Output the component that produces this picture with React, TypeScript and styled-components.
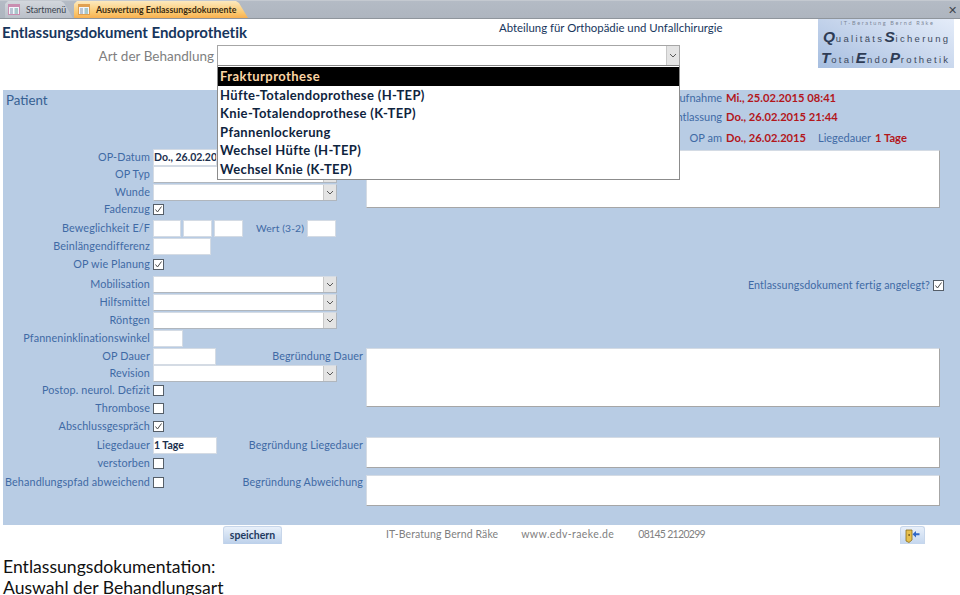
import styled, { createGlobalStyle } from "styled-components";

const GlobalStyle = createGlobalStyle`
  html, body {
    margin: 0;
    padding: 0;
    background: #fff;
    overflow: hidden;
  }
  body {
    font-family: "Lato", "Open Sans", sans-serif;
  }
`;

const Page = styled.div`
  width: 960px;
  height: 595px;
  overflow: hidden;
`;

/* tab strip */
const TabBar = styled.div`
  height: 19px;
  box-sizing: border-box;
  background: linear-gradient(#b4bbc5, #aeb5bf);
  border-top: 1px solid #c4c9d0;
  border-bottom: 1px solid #8f959c;
  display: flex;
  align-items: flex-end;
  padding-left: 5px;
`;

const Tab = styled.div<{ $active?: boolean }>`
  height: 17px;
  box-sizing: border-box;
  width: ${({ $active }) => ($active ? "174px" : "68px")};
  margin-right: ${({ $active }) => ($active ? "0" : "1px")};
  padding-left: ${({ $active }) => ($active ? "4px" : "3px")};
  display: flex;
  align-items: center;
  gap: 6px;
  font-size: 8.8px;
  font-weight: ${({ $active }) => ($active ? 700 : 400)};
  color: ${({ $active }) => ($active ? "#3a2a10" : "#39424e")};
  white-space: nowrap;
  background: ${({ $active }) =>
    $active
      ? "linear-gradient(#fde9bd, #fbc76d 70%, #f8b050)"
      : "linear-gradient(#d3d7dd, #b9bfc8)"};
  clip-path: polygon(0 100%, 0 3px, 3px 0, calc(100% - 12px) 0, calc(100% - 9px) 2px, 100% 100%);
`;

const CloseMark = styled.div`
  margin-left: auto;
  margin-right: 3px;
  align-self: center;
  font-size: 11px;
  line-height: 16px;
  color: #40464e;
`;

/* heading area above the blue panel */
const Head = styled.div`
  height: 71px;
  display: flex;
`;

const HeadLeft = styled.div`
  width: 680px;
  padding: 4px 0 0 2px;
  box-sizing: border-box;
`;

const Title = styled.h1`
  margin: 0;
  font-size: 15px;
  line-height: 18px;
  font-weight: 700;
  color: #17365d;
  letter-spacing: -0.03px;
`;

const ChoiceRow = styled.div`
  margin-top: 4px;
  display: flex;
  align-items: center;
`;

const ChoiceLabel = styled.div`
  width: 215px;
  text-align: right;
  padding-right: 3px;
  box-sizing: border-box;
  font-size: 13.5px;
  color: #7f7f7f;
`;

const BigCombo = styled.div`
  position: relative;
  z-index: 5;
  width: 463px;
  height: 21px;
  box-sizing: border-box;
  background: #fff;
  border: 1px solid #a6a6a6;
  border-bottom-color: #888;
  display: flex;
  justify-content: flex-end;
`;

const ArrowBox = styled.div`
  width: 12px;
  background: #e4e4e4;
  border-left: 1px solid #c8c8c8;
  display: flex;
  align-items: center;
  justify-content: center;
`;

const DropList = styled.ul`
  position: absolute;
  left: -1px;
  top: 20px;
  width: 463px;
  margin: 0;
  padding: 1px 0 0;
  box-sizing: border-box;
  list-style: none;
  background: #fff;
  border: 1px solid #8c8c8c;
  border-top: 0;
`;

const DropItem = styled.li<{ $picked?: boolean }>`
  height: 18.6px;
  line-height: 18.6px;
  padding-left: 2px;
  font-size: 13px;
  font-weight: 700;
  color: ${({ $picked }) => ($picked ? "#fbd5a5" : "#0f243e")};
  background: ${({ $picked }) => ($picked ? "#000" : "transparent")};
  letter-spacing: ${({ $picked }) => ($picked ? "0.45px" : "0.35px")};
`;

const Department = styled.div`
  width: 138px;
  margin-left: -181px;
  padding-top: 2px;
  white-space: nowrap;
  font-size: 11.4px;
  line-height: 14px;
  color: #17365d;
`;

const Logo = styled.div`
  width: 136px;
  height: 49px;
  margin: 0 6px 0 auto;
  box-sizing: border-box;
  padding: 1px 0 0 3px;
  background: linear-gradient(25deg, #a6bee0, #c6d5ec 50%, #e4ecf9);
  color: #3d4a60;
  white-space: nowrap;
  overflow: hidden;
`;

const LogoTop = styled.div`
  font-size: 5.5px;
  line-height: 7px;
  letter-spacing: 1.65px;
  text-align: center;
  color: #7d8798;
`;

const LogoLine = styled.div<{ $indent: number }>`
  font-family: "Liberation Sans", sans-serif;
  font-size: 9.5px;
  line-height: 19px;
  letter-spacing: 2.3px;
  padding-left: ${({ $indent }) => `${$indent}px`};
`;

const LogoCap = styled.span`
  font-size: 15.5px;
  font-style: italic;
  font-weight: 700;
  color: #2e3c55;
  letter-spacing: 0.8px;
`;

/* blue panel */
const Panel = styled.div`
  margin-left: 3px;
  height: 435px;
  background: #b8cce4;
  display: flex;
`;

const LeftColumn = styled.div`
  width: 360px;
  flex: none;
`;

const PanelTitle = styled.div`
  height: 59px;
  padding: 2px 0 0 3px;
  box-sizing: border-box;
  font-size: 13.3px;
  line-height: 17px;
  color: #366092;
`;

const Row = styled.div<{ $h: number }>`
  height: ${({ $h }) => `${$h}px`};
  display: flex;
  align-items: flex-start;
`;

const Label = styled.div`
  width: 147px;
  flex: none;
  text-align: right;
  font-size: 10.8px;
  line-height: 16px;
  color: #3f6aa5;
  white-space: nowrap;
  letter-spacing: 0.12px;
`;

const DoneLabel = styled(Label)`
  width: auto;
  font-size: 10.7px;
`;

const Field = styled.div<{ $w: number; $left?: number }>`
  width: ${({ $w }) => `${$w}px`};
  height: 17px;
  margin-left: ${({ $left }) => `${$left ?? 3}px`};
  box-sizing: border-box;
  flex: none;
  padding-left: 0;
  background: #fff;
  border: 1px solid #d4dbe4;
  font-size: 10.5px;
  font-weight: 700;
  line-height: 15px;
  color: #1b2f4d;
  white-space: nowrap;
  overflow: hidden;
`;

const Combo = styled.div`
  width: 184px;
  height: 17px;
  margin-left: 3px;
  box-sizing: border-box;
  flex: none;
  background: #fff;
  border: 1px solid #b0b6bd;
  border-top-color: #d4dbe4;
  border-left-color: #d4dbe4;
  display: flex;
  justify-content: flex-end;
`;

const Check = styled.div`
  width: 11px;
  height: 11px;
  margin: 3px 0 0 3px;
  box-sizing: border-box;
  flex: none;
  background: #fff;
  border: 1px solid #555e68;
  display: flex;
  align-items: center;
  justify-content: center;
`;

const SideLabel = styled.div`
  margin-left: auto;
  font-size: 10.7px;
  line-height: 16px;
  color: #3f6aa5;
  white-space: nowrap;
  letter-spacing: 0.12px;
`;

const ValueLabel = styled(SideLabel)`
  margin-left: 13px;
  font-size: 10.3px;
`;

const RightColumn = styled.div`
  margin-left: 3px;
  flex: 1;
`;

const InfoRow = styled.div<{ $h: number }>`
  height: ${({ $h }) => `${$h}px`};
  display: flex;
  align-items: flex-end;
`;

const InfoLabel = styled.div<{ $w?: number; $left?: number }>`
  width: ${({ $w }) => `${$w ?? 356}px`};
  margin-left: ${({ $left }) => `${$left ?? 0}px`};
  flex: none;
  text-align: right;
  font-size: 11px;
  line-height: 16px;
  color: #3f6aa5;
  white-space: nowrap;
`;

const InfoValue = styled.div`
  margin-left: 4px;
  font-size: 11.2px;
  font-weight: 700;
  line-height: 16px;
  color: #b3161b;
  white-space: nowrap;
`;

const Memo = styled.div<{ $h: number; $top: number }>`
  width: 574px;
  height: ${({ $h }) => `${$h}px`};
  margin-top: ${({ $top }) => `${$top}px`};
  box-sizing: border-box;
  background: #fff;
  border: 1px solid #d4dbe4;
  border-right-color: #a6a6a6;
  border-bottom-color: #a6a6a6;
`;

const DoneRow = styled.div`
  width: 578px;
  height: 16px;
  margin-top: 69px;
  display: flex;
  justify-content: flex-end;
`;

/* footer */
const Footer = styled.div`
  height: 19px;
  display: flex;
  align-items: flex-start;
  padding-left: 223px;
`;

const SaveButton = styled.div`
  width: 59px;
  height: 18px;
  margin-top: 1px;
  box-sizing: border-box;
  border: 1px solid #c7d6ea;
  border-bottom: 0;
  border-radius: 3px 3px 0 0;
  background: linear-gradient(#e8f0fa, #bcd0ea);
  font-size: 10.5px;
  font-weight: 700;
  line-height: 17px;
  text-align: center;
  color: #1f3a5f;
`;

const FooterText = styled.div<{ $left: number; $spacing: number }>`
  margin-left: ${({ $left }) => `${$left}px`};
  font-size: 10.5px;
  line-height: 19px;
  color: #7f7f7f;
  white-space: nowrap;
  letter-spacing: ${({ $spacing }) => `${$spacing}px`};
`;

const ExitButton = styled.div`
  width: 25px;
  height: 18px;
  margin: 1px 35px 0 auto;
  box-sizing: border-box;
  border: 1px solid #c7d6ea;
  border-bottom: 0;
  border-radius: 3px 3px 0 0;
  background: linear-gradient(#e8f0fa, #c4d6ee);
  display: flex;
  align-items: center;
  justify-content: center;
`;

const Caption = styled.div`
  margin: 12px 0 0 3px;
  font-size: 17.6px;
  line-height: 21px;
  color: #111;
`;

const Chevron = () => (
  <svg width="8" height="5" viewBox="0 0 8 5">
    <path d="M1 1l3 3 3-3" fill="none" stroke="#5a5a5a" strokeWidth="1" />
  </svg>
);

const ComboField = () => (
  <Combo>
    <ArrowBox>
      <Chevron />
    </ArrowBox>
  </Combo>
);

const CheckBox = ({ on }: { on?: boolean }) => (
  <Check>
    {on && (
      <svg width="9" height="9" viewBox="0 0 9 9">
        <path d="M1.5 4.5l2 2.5 4-5.5" fill="none" stroke="#4a4a4a" strokeWidth="1" />
      </svg>
    )}
  </Check>
);

const FormIcon = ({ tone }: { tone: string }) => (
  <svg width="12" height="11" viewBox="0 0 12 11">
    <rect x="0.5" y="0.5" width="11" height="10" fill="#f4f6fb" stroke={tone} />
    <rect x="1" y="1" width="10" height="2" fill={tone} />
    <path d="M2 5h3M2 7h3M2 9h3" stroke="#7f93ad" />
    <path d="M6.500 5h3.500M6.500 7h3.500M6.500 9h3.500" stroke="#5b9a9a" />
  </svg>
);

const ExitIcon = () => (
  <svg width="15" height="14" viewBox="0 0 15 14">
    <path d="M1 1h6v10l-3 2.500L1 12z" fill="#e7c04e" stroke="#8c6d1a" strokeWidth="0.8" />
    <rect x="3.500" y="5" width="1.200" height="2" fill="#6b4d10" />
    <path d="M14.500 4.200H11V2L7.500 5.200 11 8.400V6.200h3.500z" fill="#2f67c8" />
  </svg>
);

const App = () => (
  <Page>
    <GlobalStyle />
    <TabBar>
      <Tab>
        <FormIcon tone="#c98db0" />
        Startmenü
      </Tab>
      <Tab $active>
        <FormIcon tone="#e0a050" />
        Auswertung Entlassungsdokumente
      </Tab>
      <CloseMark>✕</CloseMark>
    </TabBar>

    <Head>
      <HeadLeft>
        <Title>Entlassungsdokument Endoprothetik</Title>
        <ChoiceRow>
          <ChoiceLabel>Art der Behandlung</ChoiceLabel>
          <BigCombo>
            <ArrowBox>
              <Chevron />
            </ArrowBox>
            <DropList>
              <DropItem $picked>Frakturprothese</DropItem>
              <DropItem>Hüfte-Totalendoprothese (H-TEP)</DropItem>
              <DropItem>Knie-Totalendoprothese (K-TEP)</DropItem>
              <DropItem>Pfannenlockerung</DropItem>
              <DropItem>Wechsel Hüfte (H-TEP)</DropItem>
              <DropItem>Wechsel Knie (K-TEP)</DropItem>
            </DropList>
          </BigCombo>
        </ChoiceRow>
      </HeadLeft>
      <Department>Abteilung für Orthopädie und Unfallchirurgie</Department>
      <Logo>
        <LogoTop>IT-Beratung Bernd Räke</LogoTop>
        <LogoLine $indent={2}>
          <LogoCap>Q</LogoCap>ualitäts<LogoCap>S</LogoCap>icherung
        </LogoLine>
        <LogoLine $indent={0}>
          <LogoCap>T</LogoCap>otal<LogoCap>E</LogoCap>ndo<LogoCap>P</LogoCap>rothetik
        </LogoLine>
      </Logo>
    </Head>

    <Panel>
      <LeftColumn>
        <PanelTitle>Patient</PanelTitle>
        <Row $h={17}>
          <Label>OP-Datum</Label>
          <Field $w={64}>Do., 26.02.2015</Field>
        </Row>
        <Row $h={18}>
          <Label>OP Typ</Label>
          <ComboField />
        </Row>
        <Row $h={17}>
          <Label>Wunde</Label>
          <ComboField />
        </Row>
        <Row $h={19}>
          <Label>Fadenzug</Label>
          <CheckBox on />
        </Row>
        <Row $h={18}>
          <Label>Beweglichkeit E/F</Label>
          <Field $w={28} />
          <Field $w={29} $left={2} />
          <Field $w={29} $left={2} />
          <ValueLabel>Wert (3-2)</ValueLabel>
          <Field $w={29} $left={3} />
        </Row>
        <Row $h={18}>
          <Label>Beinlängendifferenz</Label>
          <Field $w={58} />
        </Row>
        <Row $h={20}>
          <Label>OP wie Planung</Label>
          <CheckBox on />
        </Row>
        <Row $h={18}>
          <Label>Mobilisation</Label>
          <ComboField />
        </Row>
        <Row $h={18}>
          <Label>Hilfsmittel</Label>
          <ComboField />
        </Row>
        <Row $h={18}>
          <Label>Röntgen</Label>
          <ComboField />
        </Row>
        <Row $h={18}>
          <Label>Pfanneninklinationswinkel</Label>
          <Field $w={30} />
        </Row>
        <Row $h={17}>
          <Label>OP Dauer</Label>
          <Field $w={63} />
          <SideLabel>Begründung Dauer</SideLabel>
        </Row>
        <Row $h={17}>
          <Label>Revision</Label>
          <ComboField />
        </Row>
        <Row $h={18}>
          <Label>Postop. neurol. Defizit</Label>
          <CheckBox />
        </Row>
        <Row $h={18}>
          <Label>Thrombose</Label>
          <CheckBox />
        </Row>
        <Row $h={19}>
          <Label>Abschlussgespräch</Label>
          <CheckBox on />
        </Row>
        <Row $h={18}>
          <Label>Liegedauer</Label>
          <Field $w={64}>1 Tage</Field>
          <SideLabel>Begründung Liegedauer</SideLabel>
        </Row>
        <Row $h={19}>
          <Label>verstorben</Label>
          <CheckBox />
        </Row>
        <Row $h={17}>
          <Label>Behandlungspfad abweichend</Label>
          <CheckBox />
          <SideLabel>Begründung Abweichung</SideLabel>
        </Row>
      </LeftColumn>

      <RightColumn>
        <InfoRow $h={16}>
          <InfoLabel>Aufnahme</InfoLabel>
          <InfoValue>Mi., 25.02.2015 08:41</InfoValue>
        </InfoRow>
        <InfoRow $h={19}>
          <InfoLabel>Entlassung</InfoLabel>
          <InfoValue>Do., 26.02.2015 21:44</InfoValue>
        </InfoRow>
        <InfoRow $h={21}>
          <InfoLabel>OP am</InfoLabel>
          <InfoValue>Do., 26.02.2015</InfoValue>
          <InfoLabel $w={56} $left={9}>Liegedauer</InfoLabel>
          <InfoValue>1 Tage</InfoValue>
        </InfoRow>
        <Memo $h={58} $top={4} />
        <DoneRow>
          <DoneLabel>Entlassungsdokument fertig angelegt?</DoneLabel>
          <CheckBox on />
        </DoneRow>
        <Memo $h={59} $top={55} />
        <Memo $h={31} $top={30} />
        <Memo $h={31} $top={7} />
      </RightColumn>
    </Panel>

    <Footer>
      <SaveButton>speichern</SaveButton>
      <FooterText $left={104} $spacing={0.1}>IT-Beratung Bernd Räke</FooterText>
      <FooterText $left={23} $spacing={0.4}>www.edv-raeke.de</FooterText>
      <FooterText $left={24} $spacing={-0.7}>08145 2120299</FooterText>
      <ExitButton>
        <ExitIcon />
      </ExitButton>
    </Footer>

    <Caption>
      Entlassungsdokumentation:
      <br />
      Auswahl der Behandlungsart
    </Caption>
  </Page>
);

export default App;
